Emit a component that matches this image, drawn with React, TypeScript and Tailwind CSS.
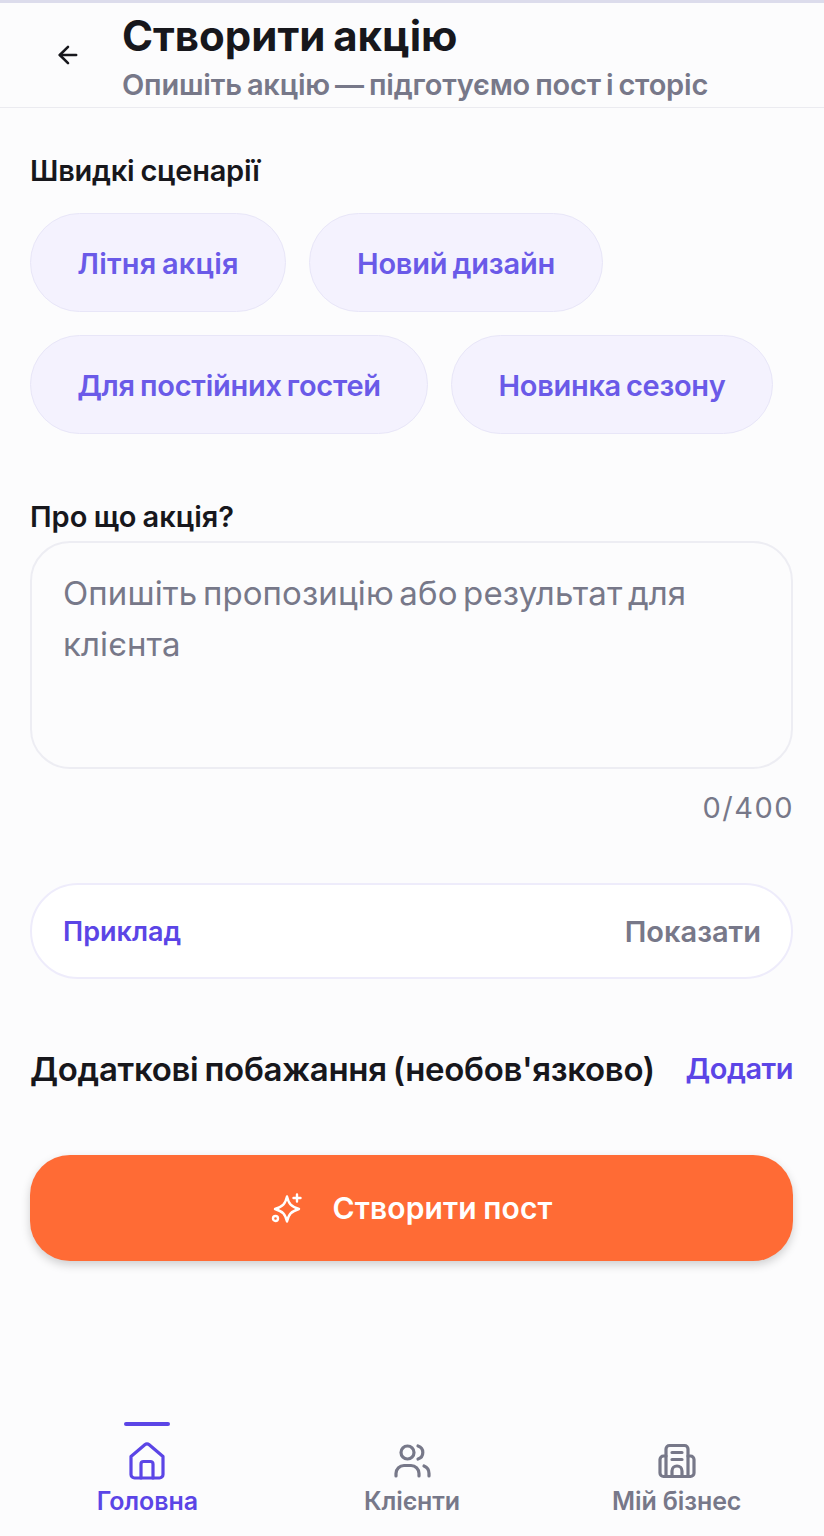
import { ArrowLeft } from 'lucide-react';

const PAGE_FONT = { fontFamily: 'Inter, Roboto, "Noto Sans", sans-serif' };

function Chip({ label, className }: { label: string; className: string }) {
  return (
    <button className={`h-[99px] pt-[2px] rounded-[50px] bg-[#f4f2fe] border border-[#e8e6f8] text-[#6a5ae8] text-[29px] [word-spacing:-2px] font-semibold ${className}`}>
      {label}
    </button>
  );
}

function NavItem({ label, active, icon }: { label: string; active?: boolean; icon: React.ReactNode }) {
  return (
    <div className={`relative flex flex-col items-center pt-[19px] ${active ? 'text-[#5b45e6]' : 'text-[#777889]'}`}>
      {active && <div className="absolute top-0 w-[46px] h-[4px] rounded-full bg-[#5b45e6]" />}
      {icon}
      <span className="text-[25px] leading-[30px] tracking-[-0.1px] font-semibold mt-[5px]">{label}</span>
    </div>
  );
}

const HomeIcon = (
  <svg width="40" height="40" viewBox="0 0 40 40" fill="none" stroke="currentColor" strokeWidth="3.200" strokeLinejoin="round" strokeLinecap="round">
    <path d="M4 15.500 17.800 3.800a3.400 3.400 0 0 1 4.400 0L36 15.500V33.500a3.500 3.500 0 0 1-3.500 3.500h-25A3.500 3.500 0 0 1 4 33.500Z" />
    <path d="M14 37V23a2.500 2.500 0 0 1 2.500-2.500h7A2.500 2.500 0 0 1 26 23v14" />
  </svg>
);

const UsersIcon = (
  <svg width="40" height="40" viewBox="0 0 40 40" fill="none" stroke="currentColor" strokeWidth="3.200" strokeLinecap="round" strokeLinejoin="round">
    <circle cx="15.500" cy="11.500" r="6.500" />
    <path d="M4 35v-2.500a8 8 0 0 1 8-8h7a8 8 0 0 1 8 8V35" />
    <path d="M26 5a6.800 6.800 0 0 1 0 13" />
    <path d="M32 25a8 8 0 0 1 5 7.500V35" />
  </svg>
);

const BuildingIcon = (
  <svg width="40" height="40" viewBox="0 0 40 40" fill="none" stroke="currentColor" strokeWidth="3.200" strokeLinecap="round" strokeLinejoin="round">
    <path d="M9 35.500V8a3.500 3.500 0 0 1 3.500-3.500h15A3.500 3.500 0 0 1 31 8v27.500" />
    <path d="M9 15H6.500A3.500 3.500 0 0 0 3 18.500v13.500a3.500 3.500 0 0 0 3.500 3.500h27a3.500 3.500 0 0 0 3.500-3.500V18.500A3.500 3.500 0 0 0 33.500 15H31" />
    <path d="M15 11.500h10M15 18.500h10" />
    <path d="M15 35.500V30a5 5 0 0 1 10 0v5.500" />
  </svg>
);

export default function App() {
  return (
    <div style={PAGE_FONT} className="w-[824px] h-[1536px] bg-[#fcfcfd] flex flex-col overflow-hidden">
      {/* Header */}
      <div className="border-t-[3px] border-[#dcdcec]">
        <div className="h-[105px] flex border-b border-[#ebebf0]">
          <div className="w-[122px] flex items-center pl-[54px]">
            <ArrowLeft size={28} strokeWidth={2.2} className="text-[#17171c]" />
          </div>
          <div>
            <h1 className="text-[42px] leading-[50px] mt-[8px] [word-spacing:-2px] font-bold text-[#17171c]">Створити акцію</h1>
            <p className="text-[29px] leading-[38px] mt-[5px] tracking-[-0.2px] [word-spacing:-2px] font-semibold text-[#777889]">Опишіть акцію — підготуємо пост і сторіс</p>
          </div>
        </div>
      </div>

      <div className="pl-[30px] pr-[31px] flex flex-col flex-1">
        <h2 className="mt-[45px] text-[29px] leading-[36px] tracking-[-0.25px] [word-spacing:-1px] font-semibold text-[#17171c]">Швидкі сценарії</h2>
        <div className="mt-[24px] flex flex-wrap gap-[23px]">
          <Chip label="Літня акція" className="w-[256px] tracking-[0.2px]" />
          <Chip label="Новий дизайн" className="w-[294px] tracking-[-0.2px]" />
          <Chip label="Для постійних гостей" className="w-[398px] tracking-[-0.25px]" />
          <Chip label="Новинка сезону" className="w-[322px] tracking-[-0.3px]" />
        </div>

        <h2 className="mt-[65px] text-[29px] leading-[36px] [word-spacing:-1px] font-semibold text-[#17171c]">Про що акція?</h2>
        <div className="mt-[6px] h-[228px] rounded-[40px] border-2 border-[#ededf3] bg-[#fcfcfd] px-[31px] pt-[25px] text-[33px] leading-[51px] tracking-[0.1px] [word-spacing:-3.800px] text-[#777889]">
          Опишіть пропозицію або результат для клієнта
        </div>
        <div className="mt-[22px] -mr-[1px] text-right text-[29px] leading-[34px] tracking-[1.500px] text-[#777889]">0/400</div>

        <div className="mt-[58px] h-[96px] rounded-[48px] border-2 border-[#eeecfb] bg-white pl-[31px] pr-[30px] pt-[2px] flex items-center justify-between">
          <span className="text-[27px] font-semibold text-[#5b45e6]">Приклад</span>
          <span className="text-[29px] font-semibold text-[#777889]">Показати</span>
        </div>

        <div className="mt-[70px] flex items-center justify-between">
          <span className="text-[33px] leading-[40px] tracking-[-0.3px] [word-spacing:-2px] font-semibold text-[#17171c]">Додаткові побажання (необов'язково)</span>
          <span className="text-[29px] leading-[40px] tracking-[-0.5px] font-semibold text-[#5b45e6]">Додати</span>
        </div>

        <button className="mt-[66px] h-[106px] pt-[1px] rounded-[40px] bg-[#ff6b35] shadow-[0_4px_10px_rgba(0,0,0,0.18)] flex items-center justify-center gap-[30px] text-white text-[30px] tracking-[0.1px] [word-spacing:-1px] font-semibold">
          <svg width="32" height="32" viewBox="0 0 32 32" fill="none" stroke="currentColor" strokeWidth="2.400" strokeLinecap="round" strokeLinejoin="round">
            <path d="M16 3.500C17.800 11 20 13.500 28 16 20 18.500 17.800 21 16 28.500 14.200 21 12 18.500 4 16 12 13.500 14.200 11 16 3.500Z" />
            <path d="M26 1.500v7M22.500 5h7" />
            <circle cx="4.500" cy="25.500" r="2.500" />
          </svg>
          Створити пост
        </button>
      </div>

      {/* Bottom nav */}
      <div className="h-[114px] grid grid-cols-3 px-[15px]">
        <NavItem label="Головна" active icon={HomeIcon} />
        <NavItem label="Клієнти" icon={UsersIcon} />
        <NavItem label="Мій бізнес" icon={BuildingIcon} />
      </div>
    </div>
  );
}
